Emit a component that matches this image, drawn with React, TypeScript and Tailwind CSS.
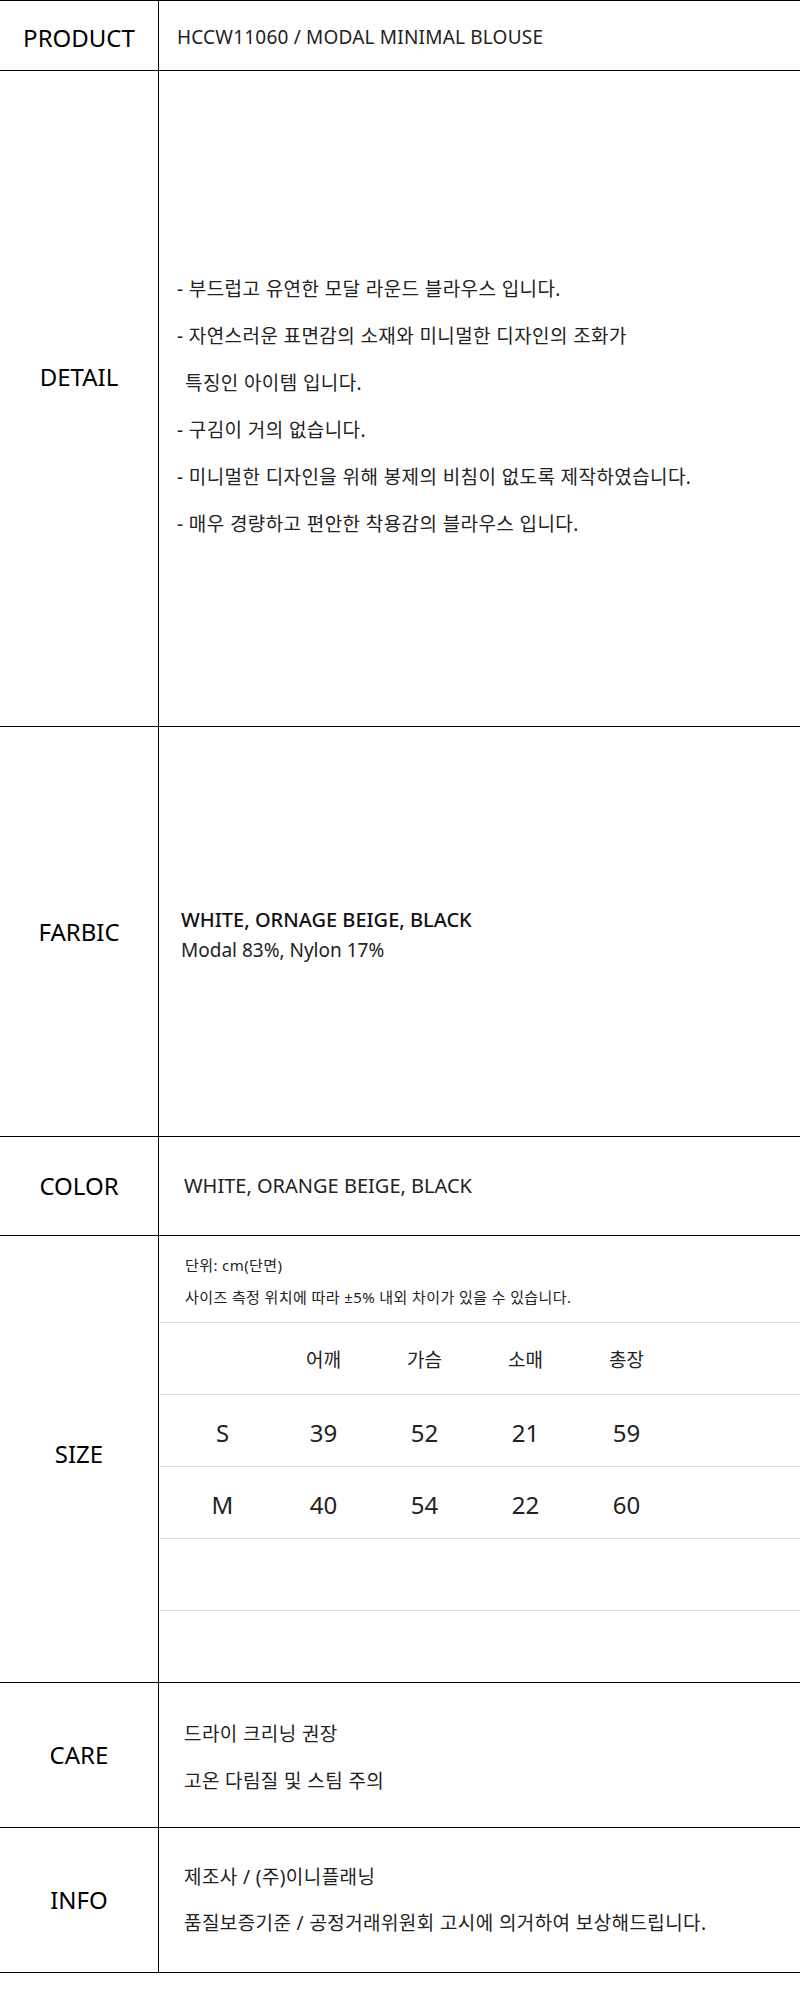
import React from "react";

type RowProps = {
  label: string;
  height: string;
  labelClass?: string;
  cellClass?: string;
  children?: React.ReactNode;
};

const Row: React.FC<RowProps> = ({ label, height, labelClass = "", cellClass = "", children }) => (
  <div className={`grid grid-cols-[158px_1fr] border-b border-black ${height}`}>
    <div className={`flex items-center justify-center text-[24px] text-black ${labelClass}`}>{label}</div>
    <div className={`border-l border-black ${cellClass}`}>{children}</div>
  </div>
);

const sizes = [
  { size: "S", values: ["39", "52", "21", "59"] },
  { size: "M", values: ["40", "54", "22", "60"] },
];

const details = [
  "- 부드럽고 유연한 모달 라운드 블라우스 입니다.",
  "- 자연스러운 표면감의 소재와 미니멀한 디자인의 조화가",
  "특징인 아이템 입니다.",
  "- 구김이 거의 없습니다.",
  "- 미니멀한 디자인을 위해 봉제의 비침이 없도록 제작하였습니다.",
  "- 매우 경량하고 편안한 착용감의 블라우스 입니다.",
];

export default function App() {
  return (
    <div className="w-[800px] bg-white font-['Noto_Sans','Noto_Sans_CJK_KR',sans-serif] text-[#222]">
      <div className="border-t border-black">
        <Row label="PRODUCT" height="h-[70px]" labelClass="pt-1" cellClass="flex items-center pl-[18px] pt-1 text-[19px] tracking-[0.2px]">
          HCCW11060 / MODAL MINIMAL BLOUSE
        </Row>

        <Row label="DETAIL" height="h-[656px]" labelClass="pb-[44px]" cellClass="flex flex-col justify-center pl-[18px] pt-4 text-[19px] leading-[47px] tracking-[0.4px]">
          {details.map((line, i) => (
            <p key={i} className={i === 2 ? "pl-[8px]" : ""}>
              {line}
            </p>
          ))}
        </Row>

        <Row label="FARBIC" height="h-[410px]" cellClass="flex flex-col justify-center pl-[22px] pt-[6px] leading-[30px]">
          <p className="text-[20px] font-medium text-[#111]">WHITE, ORNAGE BEIGE, BLACK</p>
          <p className="text-[19px]">Modal 83%, Nylon 17%</p>
        </Row>

        <Row label="COLOR" height="h-[99px]" cellClass="flex items-center pl-[25px] text-[20px]">
          WHITE, ORANGE BEIGE, BLACK
        </Row>

        <Row label="SIZE" height="h-[447px]" labelClass="pb-[10px]" cellClass="flex flex-col">
          <div className="h-[86px] pl-[26px] pt-[13px] text-[15px] leading-[32px] tracking-[0.4px]">
            <p>단위: cm(단면)</p>
            <p>사이즈 측정 위치에 따라 ±5% 내외 차이가 있을 수 있습니다.</p>
          </div>
          <div className="grid h-[72px] grid-cols-[101px_101px_101px_101px_101px] items-center border-t border-[#dddddd] pl-[13px] pt-1 text-center text-[19px]">
            <span />
            <span>어깨</span>
            <span>가슴</span>
            <span>소매</span>
            <span>총장</span>
          </div>
          {sizes.map((row) => (
            <div
              key={row.size}
              className="grid h-[72px] grid-cols-[101px_101px_101px_101px_101px] items-center border-t border-[#dddddd] pl-[13px] pt-1 text-center text-[24px]"
            >
              <span>{row.size}</span>
              {row.values.map((v, i) => (
                <span key={i}>{v}</span>
              ))}
            </div>
          ))}
          <div className="h-[72px] border-t border-[#dddddd]" />
          <div className="h-[72px] border-t border-[#dddddd]" />
        </Row>

        <Row label="CARE" height="h-[145px]" cellClass="flex flex-col justify-center pl-[25px] pt-[5px] text-[19px] leading-[47px] tracking-[0.4px]">
          <p>드라이 크리닝 권장</p>
          <p>고온 다림질 및 스팀 주의</p>
        </Row>

        <Row label="INFO" height="h-[145px]" cellClass="flex flex-col justify-center pl-[25px] text-[19px] leading-[46px] tracking-[0.4px]">
          <p>제조사 / (주)이니플래닝</p>
          <p>품질보증기준 / 공정거래위원회 고시에 의거하여 보상해드립니다.</p>
        </Row>
      </div>
    </div>
  );
}
